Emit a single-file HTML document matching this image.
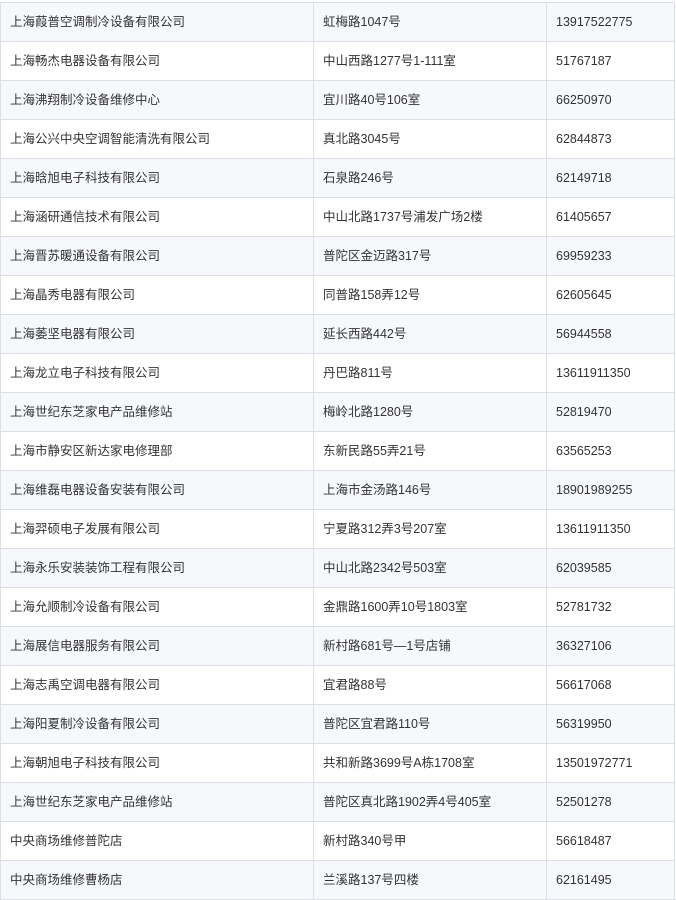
<!DOCTYPE html><html><head><meta charset="utf-8"><style>
body{margin:0;background:#fff;width:676px;height:900px;overflow:hidden;position:relative;font-family:"Liberation Sans","Noto Sans CJK SC",sans-serif;font-size:12.5px;color:#333}
.r{position:absolute;left:0;width:675px;height:39px;border-top:1px solid #dcdfe6;box-sizing:border-box}
.r.o{background:#f6f8fc}
.c{position:absolute;top:0;height:38px;line-height:38px;border-left:1px solid #dcdfe6;padding-left:9px;white-space:nowrap;box-sizing:border-box}
.c1{left:0;width:313px}.c2{left:313px;width:233px}.c3{left:546px;width:129px;border-right:1px solid #dcdfe6}
.bot{position:absolute;left:0;top:899px;width:676px;height:1px;background:#dcdfe6}
</style></head><body>
<div id="t"></div>
<script>
var d=[["上海葭普空调制冷设备有限公司","虹梅路1047号","13917522775"],
["上海畅杰电器设备有限公司","中山西路1277号1-111室","51767187"],
["上海沸翔制冷设备维修中心","宜川路40号106室","66250970"],
["上海公兴中央空调智能清洗有限公司","真北路3045号","62844873"],
["上海晗旭电子科技有限公司","石泉路246号","62149718"],
["上海涵研通信技术有限公司","中山北路1737号浦发广场2楼","61405657"],
["上海晋苏暖通设备有限公司","普陀区金迈路317号","69959233"],
["上海晶秀电器有限公司","同普路158弄12号","62605645"],
["上海萎坚电器有限公司","延长西路442号","56944558"],
["上海龙立电子科技有限公司","丹巴路811号","13611911350"],
["上海世纪东芝家电产品维修站","梅岭北路1280号","52819470"],
["上海市静安区新达家电修理部","东新民路55弄21号","63565253"],
["上海维磊电器设备安装有限公司","上海市金汤路146号","18901989255"],
["上海羿硕电子发展有限公司","宁夏路312弄3号207室","13611911350"],
["上海永乐安装装饰工程有限公司","中山北路2342号503室","62039585"],
["上海允顺制冷设备有限公司","金鼎路1600弄10号1803室","52781732"],
["上海展信电器服务有限公司","新村路681号—1号店铺","36327106"],
["上海志禹空调电器有限公司","宜君路88号","56617068"],
["上海阳夏制冷设备有限公司","普陀区宜君路110号","56319950"],
["上海朝旭电子科技有限公司","共和新路3699号A栋1708室","13501972771"],
["上海世纪东芝家电产品维修站","普陀区真北路1902弄4号405室","52501278"],
["中央商场维修普陀店","新村路340号甲","56618487"],
["中央商场维修曹杨店","兰溪路137号四楼","62161495"]];
</script>
<div class="r o" style="top:2px"><div class="c c1">上海葭普空调制冷设备有限公司</div><div class="c c2">虹梅路1047号</div><div class="c c3">13917522775</div></div>
<div class="r" style="top:41px"><div class="c c1">上海畅杰电器设备有限公司</div><div class="c c2">中山西路1277号1-111室</div><div class="c c3">51767187</div></div>
<div class="r o" style="top:80px"><div class="c c1">上海沸翔制冷设备维修中心</div><div class="c c2">宜川路40号106室</div><div class="c c3">66250970</div></div>
<div class="r" style="top:119px"><div class="c c1">上海公兴中央空调智能清洗有限公司</div><div class="c c2">真北路3045号</div><div class="c c3">62844873</div></div>
<div class="r o" style="top:158px"><div class="c c1">上海晗旭电子科技有限公司</div><div class="c c2">石泉路246号</div><div class="c c3">62149718</div></div>
<div class="r" style="top:197px"><div class="c c1">上海涵研通信技术有限公司</div><div class="c c2">中山北路1737号浦发广场2楼</div><div class="c c3">61405657</div></div>
<div class="r o" style="top:236px"><div class="c c1">上海晋苏暖通设备有限公司</div><div class="c c2">普陀区金迈路317号</div><div class="c c3">69959233</div></div>
<div class="r" style="top:275px"><div class="c c1">上海晶秀电器有限公司</div><div class="c c2">同普路158弄12号</div><div class="c c3">62605645</div></div>
<div class="r o" style="top:314px"><div class="c c1">上海萎坚电器有限公司</div><div class="c c2">延长西路442号</div><div class="c c3">56944558</div></div>
<div class="r" style="top:353px"><div class="c c1">上海龙立电子科技有限公司</div><div class="c c2">丹巴路811号</div><div class="c c3">13611911350</div></div>
<div class="r o" style="top:392px"><div class="c c1">上海世纪东芝家电产品维修站</div><div class="c c2">梅岭北路1280号</div><div class="c c3">52819470</div></div>
<div class="r" style="top:431px"><div class="c c1">上海市静安区新达家电修理部</div><div class="c c2">东新民路55弄21号</div><div class="c c3">63565253</div></div>
<div class="r o" style="top:470px"><div class="c c1">上海维磊电器设备安装有限公司</div><div class="c c2">上海市金汤路146号</div><div class="c c3">18901989255</div></div>
<div class="r" style="top:509px"><div class="c c1">上海羿硕电子发展有限公司</div><div class="c c2">宁夏路312弄3号207室</div><div class="c c3">13611911350</div></div>
<div class="r o" style="top:548px"><div class="c c1">上海永乐安装装饰工程有限公司</div><div class="c c2">中山北路2342号503室</div><div class="c c3">62039585</div></div>
<div class="r" style="top:587px"><div class="c c1">上海允顺制冷设备有限公司</div><div class="c c2">金鼎路1600弄10号1803室</div><div class="c c3">52781732</div></div>
<div class="r o" style="top:626px"><div class="c c1">上海展信电器服务有限公司</div><div class="c c2">新村路681号—1号店铺</div><div class="c c3">36327106</div></div>
<div class="r" style="top:665px"><div class="c c1">上海志禹空调电器有限公司</div><div class="c c2">宜君路88号</div><div class="c c3">56617068</div></div>
<div class="r o" style="top:704px"><div class="c c1">上海阳夏制冷设备有限公司</div><div class="c c2">普陀区宜君路110号</div><div class="c c3">56319950</div></div>
<div class="r" style="top:743px"><div class="c c1">上海朝旭电子科技有限公司</div><div class="c c2">共和新路3699号A栋1708室</div><div class="c c3">13501972771</div></div>
<div class="r o" style="top:782px"><div class="c c1">上海世纪东芝家电产品维修站</div><div class="c c2">普陀区真北路1902弄4号405室</div><div class="c c3">52501278</div></div>
<div class="r" style="top:821px"><div class="c c1">中央商场维修普陀店</div><div class="c c2">新村路340号甲</div><div class="c c3">56618487</div></div>
<div class="r o" style="top:860px"><div class="c c1">中央商场维修曹杨店</div><div class="c c2">兰溪路137号四楼</div><div class="c c3">62161495</div></div>
<div class="bot"></div>
</body></html>
